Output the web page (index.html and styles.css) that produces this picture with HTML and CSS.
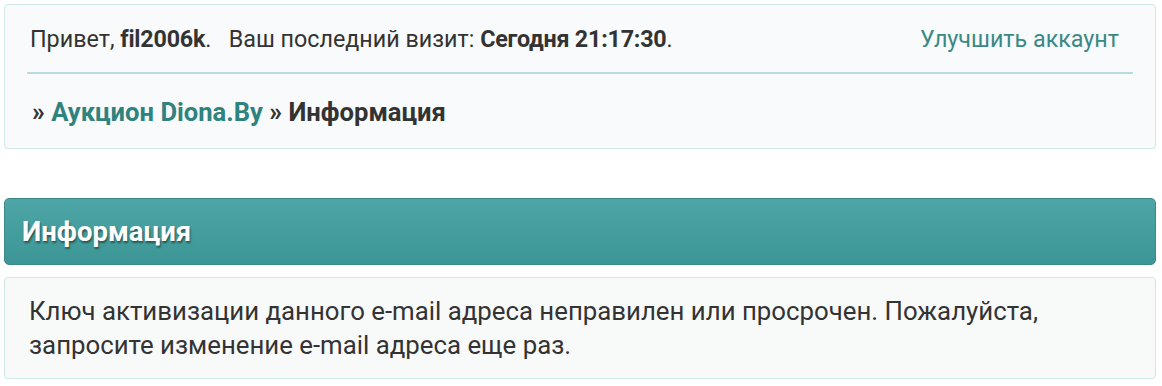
FILE: index.html
```html
<!DOCTYPE html>
<html lang="ru">
<head>
    <meta charset="UTF-8">
    <title>Информация</title>
    <link rel="stylesheet" href="styles.css">
</head>
<body>
    <div class="userbar">
        <div class="greeting">
            <div class="welcome">Привет, <b>fil2006k</b>.&nbsp;&nbsp; Ваш последний визит: <b>Сегодня 21:17:30</b>.</div>
            <a class="upgrade" href="#">Улучшить аккаунт</a>
        </div>
        <div class="crumbs">» <a href="#">Аукцион Diona.By</a> » Информация</div>
    </div>

    <div class="panel-head">Информация</div>
    <div class="panel-body">
        Ключ активизации данного e-mail адреса неправилен или просрочен. Пожалуйста, запросите изменение e-mail адреса еще раз.
    </div>
</body>
</html>
```

FILE: styles.css
```css
body {
    margin: 0;
    padding: 4px 6px 0 4px;
    font-family: 'Roboto', 'Liberation Sans', sans-serif;
    font-size: 23.3px;
    color: #333;
    background: #fff;
}

a {
    color: #2f827e;
    text-decoration: none;
}

.userbar {
    background-color: #f8fafb;
    border: 1px solid #cfe7e7;
    border-radius: 4px;
    padding: 0 22px;
    height: 145px;
    box-sizing: border-box;
}

.greeting {
    display: flex;
    justify-content: space-between;
    align-items: center;
    height: 67px;
    padding: 0 14px 0 3px;
    border-bottom: 2px solid #b7dcdb;
}

.welcome b {
    letter-spacing: -0.2px;
}

.upgrade {
    color: #3a8985;
}

.crumbs {
    font-weight: bold;
    font-size: 25.6px;
    padding: 0 0 0 5px;
    line-height: 76px;
}

.panel-head {
    margin-top: 49px;
    height: 67px;
    box-sizing: border-box;
    border: 1px solid #3a8a8a;
    border-radius: 5px;
    background: linear-gradient(#4da6a5, #3c9695);
    color: #fff;
    font-weight: bold;
    font-size: 27.5px;
    display: flex;
    align-items: center;
    padding-left: 17px;
    text-shadow: 1px 2px 2px rgba(0, 0, 0, 0.45);
}

.panel-body {
    margin-top: 12px;
    border: 1px solid #cfe7e7;
    border-radius: 4px;
    background-color: #f8fafa;
    padding: 16px 24px 16px 24px;
    line-height: 34px;
    font-size: 25.8px;
    height: 102px;
    box-sizing: border-box;
}
```
